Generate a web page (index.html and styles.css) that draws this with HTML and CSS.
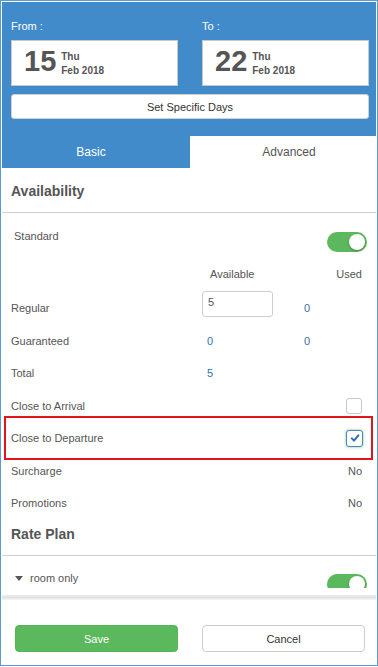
FILE: index.html
```html
<!DOCTYPE html>
<html lang="en">
  <head>
    <meta charset="UTF-8" />
    <meta name="viewport" content="width=device-width, initial-scale=1.0" />
    <title>Availability</title>
    <link rel="stylesheet" href="styles.css">
  </head>
  <body>
    <div class="frame">
      <header class="range">
        <div class="range-top">
          <div class="dates">
            <div class="date-col">
              <div class="date-label">From :</div>
              <div class="date-box">
                <span class="day">15</span>
                <span class="date-meta"><b>Thu</b><b>Feb 2018</b></span>
              </div>
            </div>
            <div class="date-col">
              <div class="date-label">To :</div>
              <div class="date-box">
                <span class="day">22</span>
                <span class="date-meta"><b>Thu</b><b>Feb 2018</b></span>
              </div>
            </div>
          </div>
          <button class="specific">Set Specific Days</button>
        </div>
        <nav class="tabs">
          <span class="tab active">Basic</span>
          <span class="tab">Advanced</span>
        </nav>
      </header>

      <main class="scroll">
        <h2 class="section-title">Availability</h2>
        <div class="room-row">
          <span class="room-name">Standard</span>
          <span class="toggle"></span>
        </div>

        <div class="grid-row head">
          <span></span>
          <span class="col-avail">Available</span>
          <span class="col-used">Used</span>
        </div>
        <div class="grid-row regular">
          <span class="label">Regular</span>
          <input class="qty" type="text" value="5" />
          <span class="num">0</span>
        </div>
        <div class="grid-row guaranteed">
          <span class="label">Guaranteed</span>
          <span class="num">0</span>
          <span class="num">0</span>
        </div>
        <div class="grid-row">
          <span class="label">Total</span>
          <span class="num">5</span>
          <span></span>
        </div>

        <div class="line-row">
          <span class="label">Close to Arrival</span>
          <span class="check"></span>
        </div>
        <div class="line-row highlight">
          <span class="label">Close to Departure</span>
          <span class="check checked">
            <svg width="10" height="10" viewBox="0 0 10 10">
              <path d="M1.8 5.4 L4 7.6 L8.4 2.4" fill="none" stroke="#2c6cb6" stroke-width="2" stroke-linecap="round" stroke-linejoin="round"/>
            </svg>
          </span>
        </div>
        <div class="line-row">
          <span class="label">Surcharge</span>
          <span class="label">No</span>
        </div>
        <div class="line-row">
          <span class="label">Promotions</span>
          <span class="label">No</span>
        </div>

        <h2 class="section-title rate">Rate Plan</h2>
        <div class="room-row plan">
          <span class="room-name"><i class="caret"></i>room only</span>
          <span class="toggle"></span>
        </div>
      </main>

      <footer class="actions">
        <div class="shade"></div>
        <div class="buttons">
          <button class="btn save">Save</button>
          <button class="btn cancel">Cancel</button>
        </div>
      </footer>
    </div>
  </body>
</html>
```

FILE: styles.css
```css
* {
  box-sizing: border-box;
}
body {
  margin: 0;
  background-color: #fff;
  font-family: "Liberation Sans", Arial, sans-serif;
  font-size: 11px;
  color: #555;
}
.frame {
  width: 378px;
  height: 666px;
  border: 1px solid #5b9bd5;
  padding: 1px;
  display: flex;
  flex-direction: column;
}

/* blue header */
.range {
  background-color: #428bca;
  color: #fff;
}
.range-top {
  padding: 16px 7px 0 9px;
}
.dates {
  display: flex;
  gap: 24px;
}
.date-col {
  flex: 1;
}
.date-label {
  line-height: 16px;
  margin-bottom: 6px;
}
.date-box {
  height: 46px;
  background-color: #fff;
  border: 1px solid #c9c9c9;
  display: flex;
  align-items: center;
  padding-left: 12px;
  color: #555;
}
.day {
  font-size: 29px;
  font-weight: bold;
  line-height: 1;
  margin-top: -4px;
}
.date-meta {
  display: flex;
  flex-direction: column;
  margin-left: 5px;
  font-size: 10px;
  line-height: 14px;
  margin-top: 1px;
}
.specific {
  display: block;
  width: 100%;
  height: 25px;
  margin-top: 8px;
  background-color: #fff;
  border: 1px solid #d0d0d0;
  border-radius: 3px;
  font-family: inherit;
  font-size: 11px;
  color: #333;
  padding: 0;
}
.tabs {
  display: flex;
  margin-top: 17px;
  height: 32px;
}
.tab {
  display: flex;
  align-items: center;
  justify-content: center;
  font-size: 12px;
  background-color: #fff;
  color: #555;
  flex: 1;
  padding-left: 12px;
}
.tab.active {
  flex: 0 0 188px;
  padding: 0 10px 0 0;
  background-color: #428bca;
  color: #fff;
}

/* scrolling content */
.scroll {
  height: 420px;
  overflow: hidden;
}
.section-title {
  margin: 0;
  padding: 2px 0 0 9px;
  line-height: 42px;
  font-size: 14px;
  font-weight: bold;
  color: #555;
  border-bottom: 1px solid #cfcfcf;
}
.section-title.rate {
  padding-top: 4px;
  padding-bottom: 11.5px;
  line-height: 20px;
}
.room-row {
  display: flex;
  justify-content: space-between;
  align-items: flex-start;
  height: 44px;
  padding: 15px 9px 0 12px;
}
.room-row .room-name {
  line-height: 16px;
}
.room-row .toggle {
  margin-top: 4px;
}
.room-row.plan {
  height: 40px;
  padding-top: 14px;
  padding-left: 11px;
}
.caret {
  display: inline-block;
  width: 0;
  height: 0;
  border-left: 4px solid transparent;
  border-right: 4px solid transparent;
  border-top: 5px solid #555;
  margin: 0 7px 1px 2px;
  vertical-align: middle;
}
.toggle {
  position: relative;
  width: 40px;
  height: 20px;
  border-radius: 10px;
  background-color: #5cb85c;
}
.toggle::after {
  content: "";
  position: absolute;
  right: 2px;
  top: 2px;
  width: 16px;
  height: 16px;
  border-radius: 50%;
  background-color: #fff;
  box-shadow: 0 1px 2px rgba(0, 0, 0, 0.3);
}

.grid-row {
  display: grid;
  grid-template-columns: 191px 101px 1fr;
  align-items: center;
  height: 32.5px;
  padding: 0 14px 0 9px;
}
.grid-row.head {
  height: 33.5px;
}
.grid-row.regular {
  height: 33.5px;
  align-items: start;
}
.grid-row.regular .label,
.grid-row.regular .num {
  margin-top: 9.5px;
  line-height: 16px;
}
.grid-row.guaranteed {
  height: 33px;
}
.col-avail {
  padding-left: 8px;
}
.col-used {
  text-align: right;
}
.num {
  color: #3a6ea5;
  padding-left: 5px;
}
.grid-row .num:last-child {
  padding-left: 1px;
}
.qty {
  width: 71px;
  height: 26px;
  border: 1px solid #cfcfcf;
  border-radius: 3px;
  padding: 0 0 3px 5px;
  font-family: inherit;
  font-size: 11px;
  color: #555;
  outline: none;
}

.line-row {
  display: flex;
  justify-content: space-between;
  align-items: center;
  height: 32.5px;
  padding: 0 14px 0 9px;
}
.line-row.highlight {
  position: relative;
}
.line-row.highlight::after {
  content: "";
  position: absolute;
  left: 2px;
  right: 3px;
  top: -6px;
  bottom: -5px;
  border: 2px solid #e0161b;
}
.check {
  width: 16px;
  height: 16px;
  border: 1px solid #c8c8c8;
  border-radius: 3px;
  background-color: #fff;
}
.check.checked {
  width: 17px;
  height: 17px;
  margin-right: -1px;
  border-color: #4a86c5;
  box-shadow: 0 0 2px 1px rgba(120, 190, 120, 0.45);
  display: flex;
  align-items: center;
  justify-content: center;
}

/* footer */
.actions {
  flex: 1;
  padding-top: 7px;
}
.shade {
  height: 5px;
  background: linear-gradient(#ececec, #e2e2e2, #f7f7f7);
}
.buttons {
  display: flex;
  gap: 24px;
  margin-top: 25px;
  padding: 0 11px 0 13px;
}
.btn {
  flex: 1;
  height: 27px;
  border-radius: 4px;
  font-family: inherit;
  font-size: 11px;
  padding: 0;
}
.save {
  background-color: #5cb85c;
  border: 1px solid #56b356;
  color: #fff;
}
.cancel {
  background-color: #fff;
  border: 1px solid #cccccc;
  color: #333;
}
```
